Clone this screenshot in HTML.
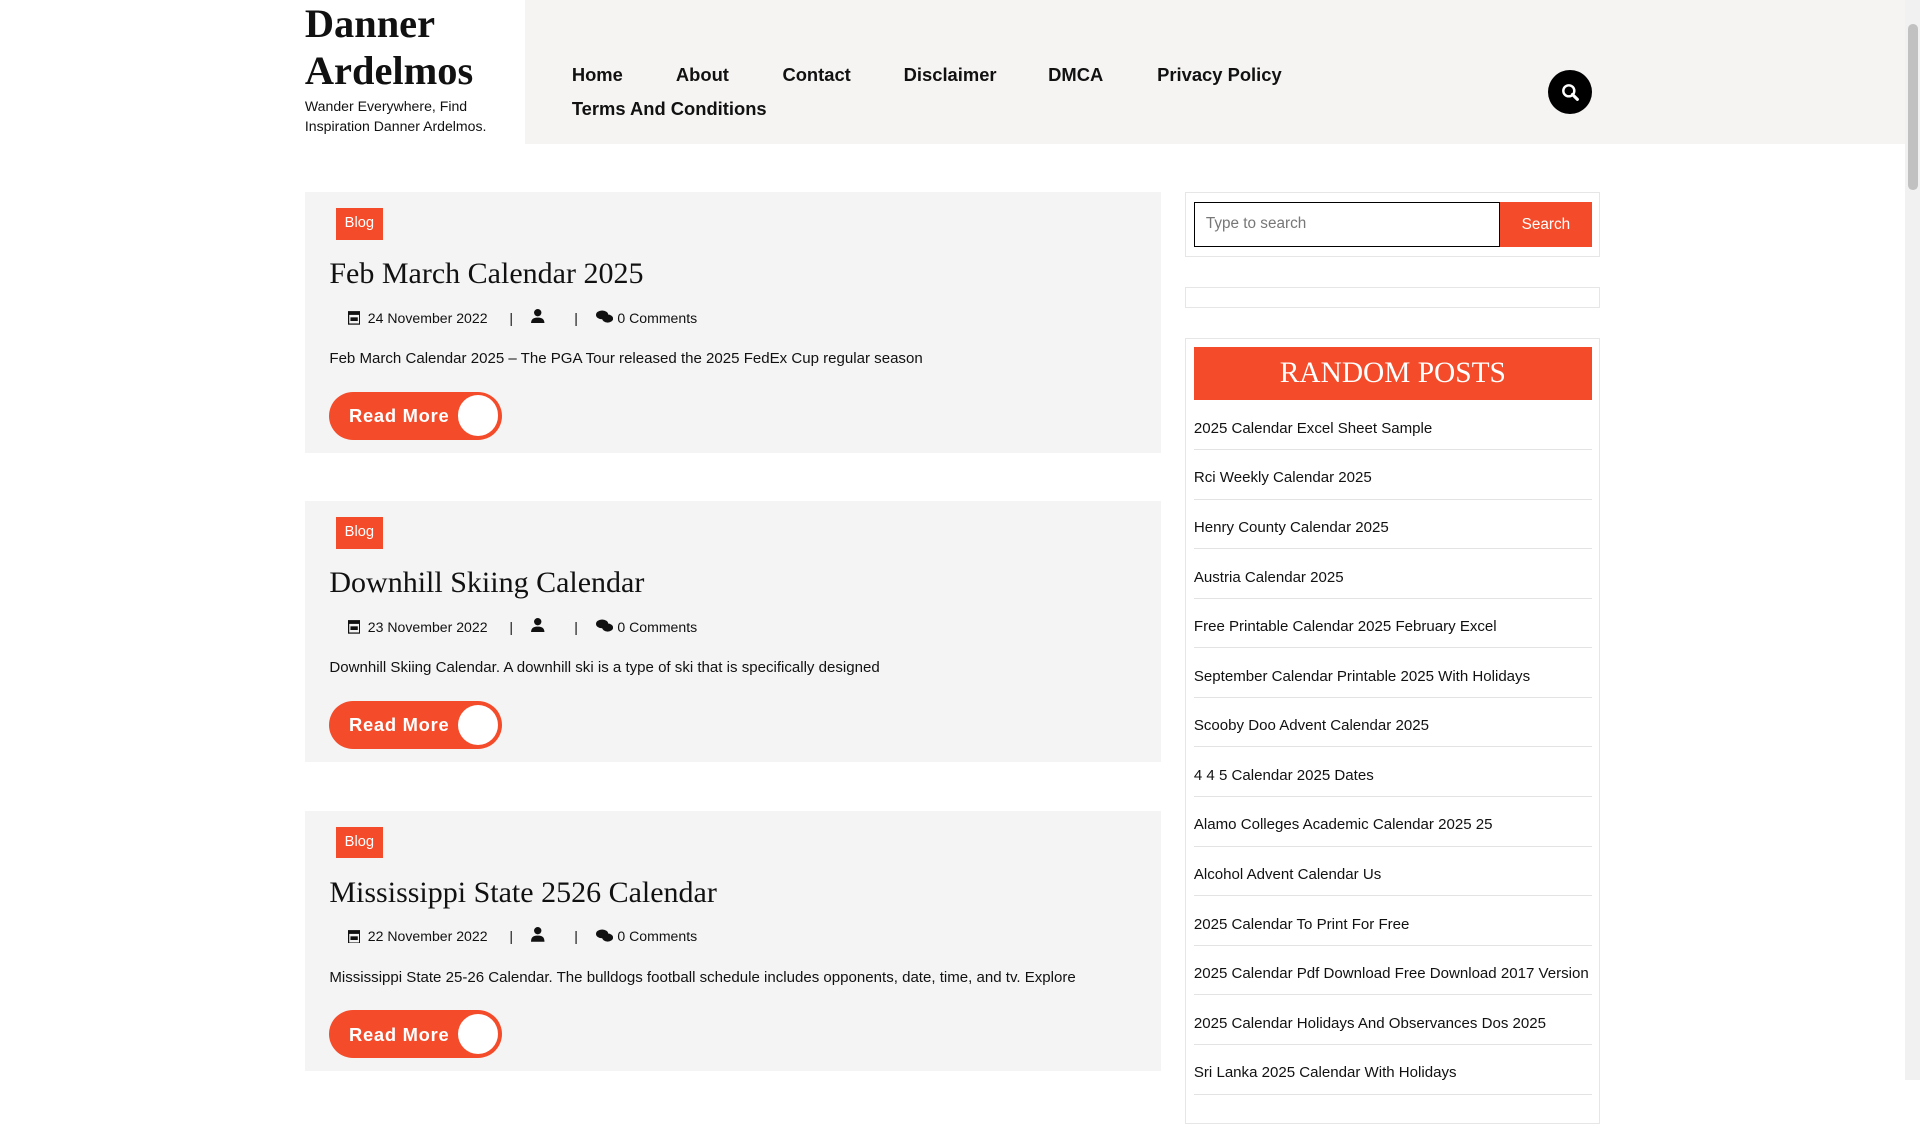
<!DOCTYPE html>
<html><head><meta charset="utf-8"><style>
html{zoom:1.2244898}
body{margin:0;width:1568px;height:882px;overflow:hidden;position:relative;background:#fff;font-family:"Liberation Sans",sans-serif;color:#111}
.a{position:absolute}
.hdr{left:429px;top:0;width:1127px;height:118px;background:#f5f4f3}
.logo{left:249px;top:0;font-family:"Liberation Serif",serif;font-weight:bold;font-size:33px;line-height:38.5px;color:#111}
.tag{left:249px;top:78px;font-size:11.5px;line-height:17px;width:170px}
.nav{font-size:15px;font-weight:bold;white-space:nowrap}
.card{left:249px;width:699px;height:213px;background:#f5f4f4}
.blog{left:25px;top:13px;width:39px;height:26px;background:#f44c2a;color:#fff;font-size:12px;line-height:26px;text-align:center}
.title{left:20px;top:53px;font-family:"Liberation Serif",serif;font-size:24.5px;white-space:nowrap}
.meta{top:95px;font-size:11.5px;line-height:16px;white-space:nowrap}
.ex{left:20px;top:129px;font-size:12.3px;white-space:nowrap}
.btn{left:20px;top:163px;width:141px;height:39px;border-radius:20px;background:#f44c2a}
.btn span{position:absolute;left:16px;top:11px;color:#fff;font-weight:bold;font-size:15px;letter-spacing:.6px}
.btn i{position:absolute;right:3px;top:3px;width:33px;height:33px;border-radius:50%;background:#fff}
.wid{left:968px;width:337px;border:1px solid #e6e6e6}
.rp{left:975px;width:325px;font-size:12.3px}
.rp div{height:40.5px;border-bottom:1px solid #e3e3e3;line-height:16px;padding-top:15px;box-sizing:border-box;white-space:nowrap}
</style></head><body>
<div class="a hdr"></div>
<div class="a logo">Danner<br>Ardelmos</div>
<div class="a tag">Wander Everywhere, Find Inspiration Danner Ardelmos.</div>
<div class="a nav" style="left:467px;top:52px">Home</div>
<div class="a nav" style="left:552px;top:52px">About</div>
<div class="a nav" style="left:639px;top:52px">Contact</div>
<div class="a nav" style="left:738px;top:52px">Disclaimer</div>
<div class="a nav" style="left:856px;top:52px">DMCA</div>
<div class="a nav" style="left:945px;top:52px">Privacy Policy</div>
<div class="a nav" style="left:467px;top:80px">Terms And Conditions</div>
<div class="a" style="left:1264px;top:57px;width:36px;height:36px;border-radius:50%;background:#000">
<svg width="36" height="36" viewBox="0 0 36 36"><circle cx="17" cy="17" r="4.5" fill="none" stroke="#fff" stroke-width="2"/><path d="M20 20l4 4" stroke="#fff" stroke-width="2.5" stroke-linecap="round"/></svg></div>

<div class="a card" style="top:157px">
<div class="a blog">Blog</div><div class="a title">Feb March Calendar 2025</div>
<div class="a meta" style="left:35px"><svg width="10" height="12" viewBox="0 0 10 12" style="vertical-align:-2px"><rect x="0.5" y="1.5" width="9" height="10" fill="none" stroke="#111"/><rect x="0" y="1" width="10" height="3" fill="#111"/><rect x="2" y="6" width="6" height="3" fill="#111"/></svg>&nbsp; 24 November 2022</div>
<div class="a meta" style="left:167px">|</div>
<div class="a meta" style="left:185px"><svg width="11" height="12" viewBox="0 0 11 12"><circle cx="5.5" cy="3" r="3" fill="#111"/><path d="M0 12c0-4 2-5 5.5-5S11 8 11 12z" fill="#111"/></svg></div>
<div class="a meta" style="left:220px">|</div>
<div class="a meta" style="left:238px"><svg width="14" height="11" viewBox="0 0 14 11" style="vertical-align:-1px"><ellipse cx="5" cy="4" rx="5" ry="3.6" fill="#111"/><ellipse cx="9.5" cy="7" rx="4.5" ry="3.3" fill="#111"/></svg>&nbsp;0 Comments</div>
<div class="a ex">Feb March Calendar 2025 – The PGA Tour released the 2025 FedEx Cup regular season</div>
<div class="a btn"><span>Read More</span><i></i></div>
</div>
<div class="a card" style="top:409.5px">
<div class="a blog">Blog</div><div class="a title">Downhill Skiing Calendar</div>
<div class="a meta" style="left:35px"><svg width="10" height="12" viewBox="0 0 10 12" style="vertical-align:-2px"><rect x="0.5" y="1.5" width="9" height="10" fill="none" stroke="#111"/><rect x="0" y="1" width="10" height="3" fill="#111"/><rect x="2" y="6" width="6" height="3" fill="#111"/></svg>&nbsp; 23 November 2022</div>
<div class="a meta" style="left:167px">|</div>
<div class="a meta" style="left:185px"><svg width="11" height="12" viewBox="0 0 11 12"><circle cx="5.5" cy="3" r="3" fill="#111"/><path d="M0 12c0-4 2-5 5.5-5S11 8 11 12z" fill="#111"/></svg></div>
<div class="a meta" style="left:220px">|</div>
<div class="a meta" style="left:238px"><svg width="14" height="11" viewBox="0 0 14 11" style="vertical-align:-1px"><ellipse cx="5" cy="4" rx="5" ry="3.6" fill="#111"/><ellipse cx="9.5" cy="7" rx="4.5" ry="3.3" fill="#111"/></svg>&nbsp;0 Comments</div>
<div class="a ex">Downhill Skiing Calendar. A downhill ski is a type of ski that is specifically designed</div>
<div class="a btn"><span>Read More</span><i></i></div>
</div>
<div class="a card" style="top:662px">
<div class="a blog">Blog</div><div class="a title">Mississippi State 2526 Calendar</div>
<div class="a meta" style="left:35px"><svg width="10" height="12" viewBox="0 0 10 12" style="vertical-align:-2px"><rect x="0.5" y="1.5" width="9" height="10" fill="none" stroke="#111"/><rect x="0" y="1" width="10" height="3" fill="#111"/><rect x="2" y="6" width="6" height="3" fill="#111"/></svg>&nbsp; 22 November 2022</div>
<div class="a meta" style="left:167px">|</div>
<div class="a meta" style="left:185px"><svg width="11" height="12" viewBox="0 0 11 12"><circle cx="5.5" cy="3" r="3" fill="#111"/><path d="M0 12c0-4 2-5 5.5-5S11 8 11 12z" fill="#111"/></svg></div>
<div class="a meta" style="left:220px">|</div>
<div class="a meta" style="left:238px"><svg width="14" height="11" viewBox="0 0 14 11" style="vertical-align:-1px"><ellipse cx="5" cy="4" rx="5" ry="3.6" fill="#111"/><ellipse cx="9.5" cy="7" rx="4.5" ry="3.3" fill="#111"/></svg>&nbsp;0 Comments</div>
<div class="a ex">Mississippi State 25-26 Calendar. The bulldogs football schedule includes opponents, date, time, and tv. Explore</div>
<div class="a btn"><span>Read More</span><i></i></div>
</div>

<div class="a wid" style="top:157px;height:51px"></div>
<div class="a" style="left:975px;top:165px;width:248px;height:35px;border:1px solid #000;background:#fff;font-size:12.5px;color:#777;line-height:35px;text-indent:9px">Type to search</div>
<div class="a" style="left:1225px;top:165px;width:75px;height:37px;background:#f44c2a;color:#fff;font-size:12.5px;line-height:37px;text-align:center">Search</div>
<div class="a wid" style="top:234px;height:16px"></div>
<div class="a wid" style="top:276px;height:640px"></div>
<div class="a" style="left:975px;top:283px;width:325px;height:44px;background:#f44c2a;color:#fff;font-family:'Liberation Serif',serif;font-size:24px;line-height:44px;text-align:center">RANDOM POSTS</div>
<div class="a rp" style="top:327px">
<div>2025 Calendar Excel Sheet Sample</div>
<div>Rci Weekly Calendar 2025</div>
<div>Henry County Calendar 2025</div>
<div>Austria Calendar 2025</div>
<div>Free Printable Calendar 2025 February Excel</div>
<div>September Calendar Printable 2025 With Holidays</div>
<div>Scooby Doo Advent Calendar 2025</div>
<div>4 4 5 Calendar 2025 Dates</div>
<div>Alamo Colleges Academic Calendar 2025 25</div>
<div>Alcohol Advent Calendar Us</div>
<div>2025 Calendar To Print For Free</div>
<div>2025 Calendar Pdf Download Free Download 2017 Version</div>
<div>2025 Calendar Holidays And Observances Dos 2025</div>
<div>Sri Lanka 2025 Calendar With Holidays</div>
</div>
<div class="a" style="left:1556px;top:0;width:12px;height:882px;background:#f1f1f1"></div>
<div class="a" style="left:1558px;top:20px;width:8px;height:135px;background:#c1c1c1;border-radius:4px"></div>
</body></html>
